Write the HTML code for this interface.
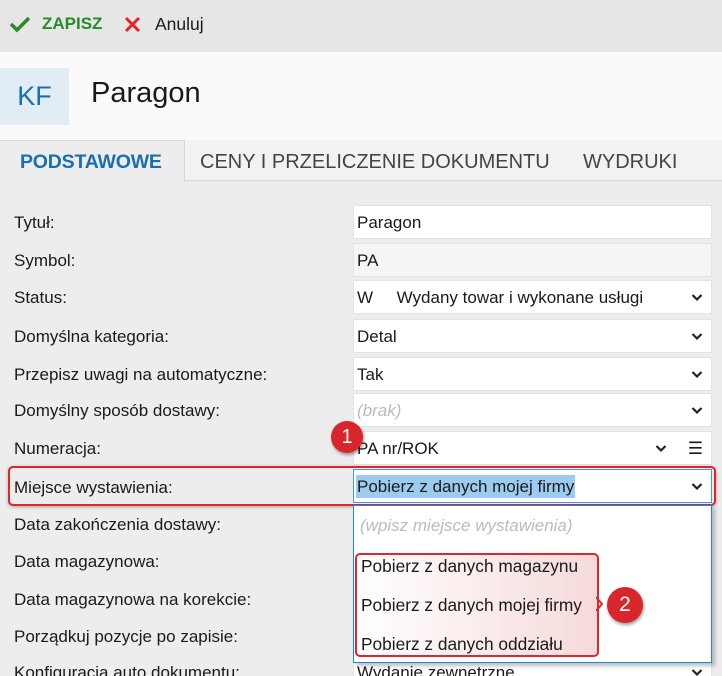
<!DOCTYPE html>
<html><head><meta charset="utf-8"><style>
*{box-sizing:border-box;margin:0;padding:0}
html,body{width:722px;height:676px;overflow:hidden}
body{background:#ededed;font-family:"Liberation Sans","DejaVu Sans",sans-serif;color:#1a1a1a;position:relative}
.a{position:absolute}
.lbl{position:absolute;left:14px;font-size:17px;white-space:nowrap}
.inp{position:absolute;left:353px;width:359px;height:34px;background:#fff;border:1px solid #e3e3e3;font-size:17px;padding:0 0 0 3px;line-height:33px;white-space:nowrap;overflow:hidden}
.chev{position:absolute;right:8px;top:11px;width:12px;height:10px}
.it{position:absolute;left:361px;font-size:17.3px;white-space:nowrap}
</style></head><body>
<div class="a" style="left:0;top:0;width:722px;height:52px;background:#e6e6e6"></div>
<svg class="a" style="left:9px;top:15px" width="22" height="18" viewBox="0 0 22 18"><path d="M2 9 L8 15 L20 3" stroke="#2a8a2a" stroke-width="3.5" fill="none"/></svg>
<div class="a" style="left:42px;top:14px;font-size:17px;font-weight:bold;color:#2a8a2a">ZAPISZ</div>
<svg class="a" style="left:124px;top:16px" width="17" height="17" viewBox="0 0 17 17"><path d="M2 2 L15 15 M15 2 L2 15" stroke="#e0262b" stroke-width="3" fill="none"/></svg>
<div class="a" style="left:155px;top:14px;font-size:17.5px">Anuluj</div>
<div class="a" style="left:0;top:52px;width:722px;height:88px;background:#fafafa"></div>
<div class="a" style="left:0;top:68px;width:69px;height:57px;background:#e1ecf4;color:#1a6fae;font-size:27px;line-height:57px;text-align:center">KF</div>
<div class="a" style="left:91px;top:77px;font-size:29px">Paragon</div>
<div class="a" style="left:0;top:140px;width:722px;height:41px;background:#f2f2f2;border-bottom:1px solid #d8d8d8"></div>
<div class="a" style="left:0;top:140px;width:185px;height:42px;background:#ededed;border-right:1px solid #d6d6d6;border-top:1px solid #d6d6d6"></div>
<div class="a" style="left:20px;top:151px;font-size:19.5px;font-weight:bold;color:#1a6fae;letter-spacing:-0.2px">PODSTAWOWE</div>
<div class="a" style="left:200px;top:151px;font-size:20px;color:#444">CENY I PRZELICZENIE DOKUMENTU</div>
<div class="a" style="left:583px;top:151px;font-size:20px;color:#444">WYDRUKI</div>

<div class="lbl" style="top:213px">Tytuł:</div>
<div class="lbl" style="top:251px">Symbol:</div>
<div class="lbl" style="top:288px">Status:</div>
<div class="lbl" style="top:327px">Domyślna kategoria:</div>
<div class="lbl" style="top:365px">Przepisz uwagi na automatyczne:</div>
<div class="lbl" style="top:401px">Domyślny sposób dostawy:</div>
<div class="lbl" style="top:439px">Numeracja:</div>
<div class="lbl" style="top:478px">Miejsce wystawienia:</div>
<div class="lbl" style="top:515px">Data zakończenia dostawy:</div>
<div class="lbl" style="top:552px">Data magazynowa:</div>
<div class="lbl" style="top:590px">Data magazynowa na korekcie:</div>
<div class="lbl" style="top:627px">Porządkuj pozycje po zapisie:</div>
<div class="lbl" style="top:663px">Konfiguracja auto dokumentu:</div>

<div class="inp" style="top:205px">Paragon</div>
<div class="inp" style="top:243px;background:#f5f5f5">PA</div>
<div class="inp" style="top:280px">W&nbsp;&nbsp;&nbsp;&nbsp;&nbsp;Wydany towar i wykonane usługi<svg class="chev" viewBox="0 0 12 10"><path d="M1.5 3 L6 7.5 L10.5 3" stroke="#222" stroke-width="2.2" fill="none"/></svg></div>
<div class="inp" style="top:319px">Detal<svg class="chev" viewBox="0 0 12 10"><path d="M1.5 3 L6 7.5 L10.5 3" stroke="#222" stroke-width="2.2" fill="none"/></svg></div>
<div class="inp" style="top:357px">Tak<svg class="chev" viewBox="0 0 12 10"><path d="M1.5 3 L6 7.5 L10.5 3" stroke="#222" stroke-width="2.2" fill="none"/></svg></div>
<div class="inp" style="top:393px;color:#bbb;font-style:italic">(brak)<svg class="chev" viewBox="0 0 12 10"><path d="M1.5 3 L6 7.5 L10.5 3" stroke="#222" stroke-width="2.2" fill="none"/></svg></div>
<div class="inp" style="top:431px">PA nr/ROK<svg class="chev" style="right:44px" viewBox="0 0 12 10"><path d="M1.5 3 L6 7.5 L10.5 3" stroke="#222" stroke-width="2.2" fill="none"/></svg><span style="position:absolute;right:8px;top:0">☰</span></div>
<div class="inp" style="top:469px;border:1px solid #3b9de0;padding-left:2px"><span style="background:#9ccbf0;padding:2px 1px">Pobierz z danych mojej firmy</span><svg class="chev" viewBox="0 0 12 10"><path d="M1.5 3 L6 7.5 L10.5 3" stroke="#222" stroke-width="2.2" fill="none"/></svg></div>
<div class="inp" style="top:655px">Wydanie zewnętrzne<svg class="chev" viewBox="0 0 12 10"><path d="M1.5 3 L6 7.5 L10.5 3" stroke="#222" stroke-width="2.2" fill="none"/></svg></div>

<div class="a" style="left:8px;top:466px;width:708px;height:40px;border:2px solid #e0262b;border-radius:5px;box-shadow:0 1px 3px rgba(0,0,0,.3)"></div>

<div class="a" style="left:353px;top:505px;width:359px;height:158px;background:#fff;border:1px solid #1e88d4;box-shadow:3px 3px 4px rgba(0,0,0,.25)"></div>
<div class="a" style="left:360px;top:516px;font-size:17px;color:#bbb;font-style:italic">(wpisz miejsce wystawienia)</div>
<div class="a" style="left:355px;top:553px;width:244px;height:104px;border:2px solid #e0262b;border-radius:5px;background:linear-gradient(90deg,#fff,#f6dada)"></div>
<div class="it" style="top:556px">Pobierz z danych magazynu</div>
<div class="it" style="top:595px">Pobierz z danych mojej firmy</div>
<div class="it" style="top:634px">Pobierz z danych oddziału</div>
<svg class="a" style="left:596px;top:597px" width="8" height="14"><path d="M0 0 L6 7 L0 14" stroke="#e0262b" stroke-width="2" fill="none"/></svg>

<div class="a" style="left:331px;top:421px;width:32px;height:32px;border-radius:50%;background:#d8262b;color:#fff;font-size:20px;line-height:32px;text-align:center;box-shadow:1px 2px 3px rgba(0,0,0,.4)">1</div>
<div class="a" style="left:607px;top:587px;width:36px;height:36px;border-radius:50%;background:#d8262b;color:#fff;font-size:21px;line-height:36px;text-align:center;box-shadow:1px 2px 3px rgba(0,0,0,.4)">2</div>
</body></html>
